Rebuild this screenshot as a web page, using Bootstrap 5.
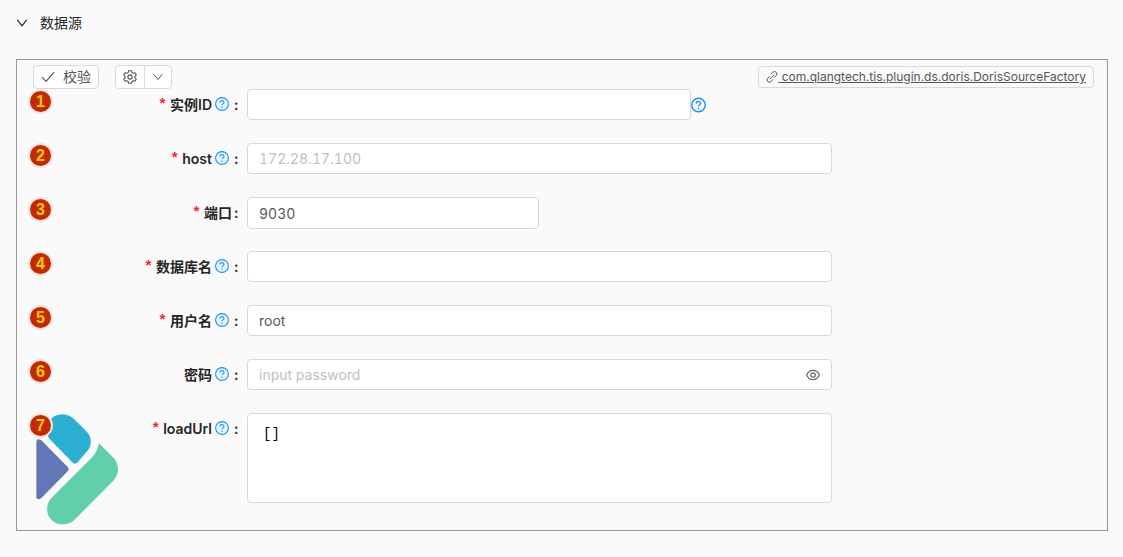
<!DOCTYPE html>
<html lang="zh-CN">
<head>
<meta charset="utf-8">
<meta name="viewport" content="width=device-width, initial-scale=1">
<title>数据源</title>
<link href="https://cdn.jsdelivr.net/npm/bootstrap@5.3.0/dist/css/bootstrap.min.css" rel="stylesheet">
<script src="https://cdn.jsdelivr.net/npm/bootstrap@5.3.0/dist/js/bootstrap.bundle.min.js" defer></script>
<style>
  body { background: #fafafa; color: #262626; font-family: Inter, "Noto Sans CJK SC", sans-serif; font-size: 14px; line-height: 22px; }
  svg { display: block; flex: none; }
  .line-icon { fill: none; stroke: currentColor; stroke-linecap: round; stroke-linejoin: round; }
  .page-body { padding: 0 15px 24px 16px; }
  .section-toggle { margin: 12px 0 25px; gap: 12px; font-size: 14px; line-height: 22px; color: #262626; }
  .source-panel { border: 1px solid #999; padding: 5px 0 27px; }
  .toolbar { padding: 0 13px 0 16px; height: 24px; }
  .btn-tool { height: 24px; padding: 0 7px; border: 1px solid #d9d9d9; border-radius: 4px; background: #fff; color: #555; font-size: 14px; line-height: 22px; }
  .plugin-tag { height: 22px; padding: 0 7px; border: 1px solid #d9d9d9; border-radius: 4px; background: #fafafa; color: #555; font-size: 12px; line-height: 20px; white-space: pre; }
  .field-row { display: grid; grid-template-columns: 230px minmax(0, 1fr); min-height: 32px; margin-bottom: 22px; }
  .field-row:last-of-type { margin-bottom: 0; }
  .field-head { padding: 0 9px 0 11px; }
  .field-label { height: 32px; font-weight: 600; }
  .required-mark { color: #ff1f2d; margin-right: 3px; padding-top: 2px; font: bold 15px/22px "Liberation Mono", monospace; }
  .colon { width: 4px; margin-left: 2px; text-align: center; }
  .help + .colon { margin-left: 5px; }
  .help { margin-left: 3px; margin-bottom: 2px; }
  .step { width: 25px; height: 25px; border-radius: 50%; border: 2px solid #f6e3df; background: #c42a02; color: #ffc814; font: bold 16px/22px "Liberation Sans", sans-serif; text-align: center; z-index: 1; }
  .field-body { width: 68%; }
  .form-control { height: 31px; padding: 3px 11px; border: 1px solid #d9d9d9; border-radius: 4px; background: #fff; color: #595959; font-size: 14px; line-height: 22px; font-feature-settings: "tnum"; }
  .form-control::placeholder { color: #bfbfbf; }
  .field-medium { width: 76%; }
  .field-short { width: 50%; height: 32px; }
  .eye { right: 12px; top: 8px; color: #666; }
  textarea.form-control { height: 90px; padding: 9px 15px; color: #000; font-family: "Liberation Mono", monospace; font-size: 14px; resize: none; }
  .brand { left: 19px; bottom: 5px; }
</style>
</head>
<body>
<svg class="d-none" aria-hidden="true">
  <symbol id="help-filled" viewBox="0 0 14 14"><circle cx="7" cy="7" r="6.4" fill="#e6f7ff" stroke="#1890ff" stroke-width="1.1"/><path d="M5 5.6C5 3 9 3 9 5.5 9 6.9 7 6.8 7 8.3" fill="none" stroke="#1890ff" stroke-width="1.1"/><circle cx="7" cy="10.2" r=".7" fill="#1890ff"/></symbol>
  <symbol id="help-open" viewBox="0 0 14 14"><circle cx="7" cy="7" r="6.3" fill="none" stroke="#1890ff" stroke-width="1.3"/><path d="M5 5.6C5 3 9 3 9 5.5 9 6.9 7 6.8 7 8.3" fill="none" stroke="#1890ff" stroke-width="1.2"/><circle cx="7" cy="10.2" r=".8" fill="#1890ff"/></symbol>
</svg>
<main class="page-body">
  <button type="button" class="section-toggle btn border-0 p-0 d-flex align-items-center">
    <svg class="line-icon" width="12" height="12" viewBox="0 0 12 12" stroke-width="1.2"><path d="M1.5 3.2 6 8.8l4.5-5.6"/></svg>
    <span>数据源</span>
  </button>
  <form class="source-panel position-relative">
    <div class="toolbar d-flex align-items-center justify-content-between">
      <div class="d-flex gap-3">
        <button type="button" class="btn btn-tool d-flex align-items-center gap-2">
          <svg class="line-icon" width="14" height="14" viewBox="0 0 14 14" stroke-width="1.2"><path d="m1.3 7.4 3.8 4L12.7 2.6"/></svg>校验
        </button>
        <div class="btn-group">
          <button type="button" class="btn btn-tool" aria-label="设置">
            <svg class="line-icon" width="14" height="14" viewBox="0 0 14 14" stroke-width="1.1"><circle cx="7" cy="7" r="2.1"/><path d="M5.6.8h2.8l.5 1.8 1.1.6 1.9-.5 1.3 2.2-1.3 1.4v1.4l1.3 1.4-1.3 2.2-1.9-.5-1.1.6-.5 1.8H5.6l-.5-1.8-1.1-.6-1.9.5L.8 9.1l1.3-1.4V6.3L.8 4.9l1.3-2.2 1.9.5 1.1-.6z"/></svg>
          </button>
          <button type="button" class="btn btn-tool" aria-label="更多">
            <svg class="line-icon" width="12" height="12" viewBox="0 0 12 12" stroke-width="1"><path d="M2 3.5 6 8.5l4-5"/></svg>
          </button>
        </div>
      </div>
      <a href="#" class="plugin-tag d-flex align-items-center"><svg class="line-icon" width="12" height="12" viewBox="0 0 12 12" stroke-width="1"><path d="m5 3 1.7-1.7a2.3 2.3 0 0 1 3.5 0 2.3 2.3 0 0 1 0 3.3L8.5 6.3M3.5 5.5 1.7 7.2a2.3 2.3 0 0 0 0 3.3 2.3 2.3 0 0 0 3.3 0L6.8 8.7M4 7.9 7.9 4"/></svg><span> com.qlangtech.tis.plugin.ds.doris.DorisSourceFactory</span></a>
    </div>

    <div class="field-row">
      <div class="field-head d-flex justify-content-between">
        <span class="step">1</span>
        <label class="field-label d-flex align-items-center" for="instance"><span class="required-mark">*</span>实例ID<svg class="help" width="14" height="14"><use href="#help-filled"/></svg><span class="colon">:</span></label>
      </div>
      <div class="field-body d-flex align-items-start"><input id="instance" type="text" class="form-control field-medium"><svg class="mt-2" width="15" height="16"><use href="#help-open"/></svg></div>
    </div>
    <div class="field-row">
      <div class="field-head d-flex justify-content-between">
        <span class="step">2</span>
        <label class="field-label d-flex align-items-center" for="host"><span class="required-mark">*</span>host<svg class="help" width="14" height="14"><use href="#help-filled"/></svg><span class="colon">:</span></label>
      </div>
      <div class="field-body"><input id="host" type="text" class="form-control" placeholder="172.28.17.100"></div>
    </div>
    <div class="field-row">
      <div class="field-head d-flex justify-content-between">
        <span class="step">3</span>
        <label class="field-label d-flex align-items-center" for="port"><span class="required-mark">*</span>端口<span class="colon">:</span></label>
      </div>
      <div class="field-body"><input id="port" type="text" class="form-control field-short" value="9030"></div>
    </div>
    <div class="field-row">
      <div class="field-head d-flex justify-content-between">
        <span class="step">4</span>
        <label class="field-label d-flex align-items-center" for="dbname"><span class="required-mark">*</span>数据库名<svg class="help" width="14" height="14"><use href="#help-filled"/></svg><span class="colon">:</span></label>
      </div>
      <div class="field-body"><input id="dbname" type="text" class="form-control"></div>
    </div>
    <div class="field-row">
      <div class="field-head d-flex justify-content-between">
        <span class="step">5</span>
        <label class="field-label d-flex align-items-center" for="user"><span class="required-mark">*</span>用户名<svg class="help" width="14" height="14"><use href="#help-filled"/></svg><span class="colon">:</span></label>
      </div>
      <div class="field-body"><input id="user" type="text" class="form-control" value="root"></div>
    </div>
    <div class="field-row">
      <div class="field-head d-flex justify-content-between">
        <span class="step">6</span>
        <label class="field-label d-flex align-items-center" for="pass">密码<svg class="help" width="14" height="14"><use href="#help-filled"/></svg><span class="colon">:</span></label>
      </div>
      <div class="field-body position-relative"><input id="pass" type="password" class="form-control" placeholder="input password">
        <svg class="eye line-icon position-absolute" width="14" height="16" viewBox="0 0 14 16" stroke-width="1.2"><path d="M.7 8C3.2 1.7 10.8 1.7 13.3 8 10.8 14.3 3.2 14.3.7 8z"/><circle cx="7" cy="8" r="2.2"/></svg>
      </div>
    </div>
    <div class="field-row">
      <div class="field-head d-flex justify-content-between">
        <span class="step">7</span>
        <label class="field-label d-flex align-items-center" for="loadurl"><span class="required-mark">*</span>loadUrl<svg class="help" width="14" height="14"><use href="#help-filled"/></svg><span class="colon">:</span></label>
      </div>
      <div class="field-body"><textarea id="loadurl" class="form-control">[]</textarea></div>
    </div>
    <svg class="brand position-absolute" width="83" height="111" viewBox="60 193 249 333" role="img" aria-label="Doris">
      <path fill="#2cafd2" d="M100 218C110 190 152 186 174 208L211 245C228 262 229 286 214 304L185 338Q177 346 169 338L100 267Q95 261 95 250z"/>
      <path fill="#6376b6" d="M76 272 156 353Q161 359 156 364L76 445Q61 455 61 439V278Q62 263 76 272z"/>
      <path fill="#62cfac" d="M249 281 291 323C311 343 311 374 292 393L175 511C152 532 117 526 101 504 89 486 91 460 107 444L229 322Q244 306 249 281z"/>
    </svg>
  </form>
</main>
</body>
</html>
